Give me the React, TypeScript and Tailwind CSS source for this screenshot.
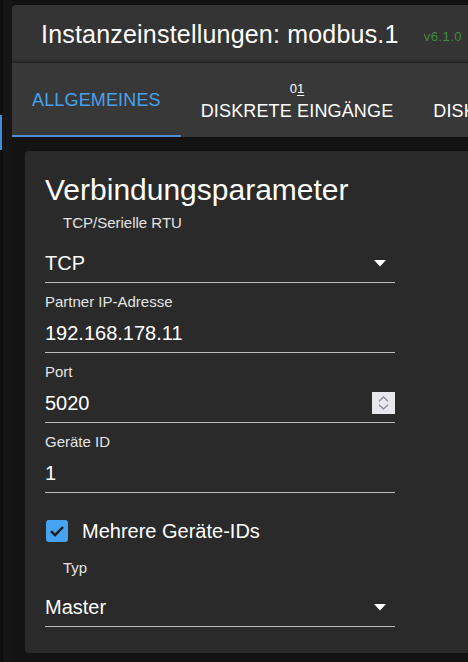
import React from 'react';

const FONT = { fontFamily: '"Liberation Sans", Arial, sans-serif' };

function SelectArrow() {
  return (
    <svg width="12" height="7" viewBox="0 0 12 7" className="block">
      <path d="M0 0h12L6 6.5z" fill="#ffffff" />
    </svg>
  );
}

function SpinButton() {
  return (
    <div className="w-[23px] h-[22px] bg-[#e9e7ee] flex flex-col items-center justify-center gap-[2px]">
      <svg width="11" height="6" viewBox="0 0 11 6">
        <path d="M1 5.2L5.5 1 10 5.2" fill="none" stroke="#8f8d9b" strokeWidth="1.4" />
      </svg>
      <svg width="11" height="6" viewBox="0 0 11 6">
        <path d="M1 0.8L5.5 5 10 0.8" fill="none" stroke="#8f8d9b" strokeWidth="1.4" />
      </svg>
    </div>
  );
}

function TextField({ label, value, spin }: { label: string; value: string; spin?: boolean }) {
  return (
    <div className="w-[350px] pt-[10px] pb-[7px] border-b border-[#bdbdbd]">
      <div className="text-[15px] leading-[18px] text-[#e3e3e3]">{label}</div>
      <div className="mt-[10px] h-[24px] flex items-center justify-between">
        <span className="text-[20px] leading-[24px] text-white">{value}</span>
        {spin && <SpinButton />}
      </div>
    </div>
  );
}

function SelectField({ label, value, gap }: { label: string; value: string; gap: string }) {
  return (
    <div className="w-[350px]">
      <div className="ml-[18px] text-[15px] leading-[18px] text-[#e3e3e3]">{label}</div>
      <div className={`${gap} pb-[7px] border-b border-[#bdbdbd] flex items-center justify-between pr-[9px]`}>
        <span className="text-[20px] leading-[24px] text-white">{value}</span>
        <SelectArrow />
      </div>
    </div>
  );
}

export default function App() {
  return (
    <div className="w-[468px] h-[662px] overflow-hidden bg-[#121212] flex" style={FONT}>
      {/* side rail behind the dialog */}
      <div className="w-[3px] shrink-0 bg-[#0e0e0e] flex flex-col">
        <div className="h-[115px]" />
        <div className="h-[35px] w-[2px] bg-[#3d8fe0]" />
      </div>
      <div className="w-[9px] shrink-0 bg-[#161616]" />

      <div className="pt-[5px] shrink-0">
        <div className="w-[520px] h-[700px] rounded-tl-[4px] overflow-hidden flex flex-col bg-[#131313]">
          {/* title bar */}
          <div className="h-[58px] bg-[#343434] pl-[29px] flex items-center gap-[25px]">
            <span className="text-[25px] leading-[28px] tracking-[0.2px] text-white whitespace-nowrap">
              Instanzeinstellungen: modbus.1
            </span>
            <span className="text-[13px] tracking-[0.5px] text-[#3f8d3f] mt-[5px] whitespace-nowrap">v6.1.0</span>
          </div>

          {/* tabs */}
          <div className="h-[74px] bg-[#383838] flex shadow-[0_-1px_3px_rgba(0,0,0,0.5)]">
            <div className="relative px-[20px] flex items-center">
              <span className="text-[18px] tracking-[0.15px] text-[#46a2ec] uppercase">Allgemeines</span>
              <div className="absolute left-0 right-0 bottom-0 h-[2px] bg-[#4a8fd8]" />
            </div>
            <div className="px-[20px] flex flex-col items-center justify-center pt-[3px]">
              <span className="text-[13px] leading-[14px] text-white">
                0<span className="underline underline-offset-[2px]">1</span>
              </span>
              <span className="mt-[5px] text-[18px] leading-[20px] tracking-[0.15px] text-white uppercase whitespace-nowrap">
                Diskrete Eingänge
              </span>
            </div>
            <div className="px-[20px] flex flex-col items-center justify-center pt-[3px]">
              <span className="text-[13px] leading-[14px] text-transparent">01</span>
              <span className="mt-[5px] text-[18px] leading-[20px] tracking-[0.15px] text-white uppercase whitespace-nowrap">
                Diskrete Ausgänge
              </span>
            </div>
          </div>

          {/* content */}
          <div className="pl-[13px] pt-[14px]">
            <div className="bg-[#2a2a2a] rounded-[4px] pl-[20px] pt-[21px] pb-[26px]">
              <div className="text-[30px] leading-[36px] text-white">Verbindungsparameter</div>
              <div className="mt-[6px]">
                <SelectField label="TCP/Serielle RTU" value="TCP" gap="mt-[19px]" />
              </div>
              <TextField label="Partner IP-Adresse" value="192.168.178.11" />
              <TextField label="Port" value="5020" spin />
              <TextField label="Geräte ID" value="1" />

              <div className="mt-[26px] flex items-center gap-[14px]">
                <div className="ml-[1px] w-[22px] h-[22px] rounded-[3px] bg-[#45a3f2] flex items-center justify-center">
                  <svg width="16" height="12" viewBox="0 0 16 12">
                    <path d="M2 6.2l4 4L14 2" fill="none" stroke="#1f1f1f" strokeWidth="2.4" />
                  </svg>
                </div>
                <span className="text-[20px] leading-[24px] text-white">Mehrere Geräte-IDs</span>
              </div>

              <div className="mt-[16px]">
                <SelectField label="Typ" value="Master" gap="mt-[18px]" />
              </div>
            </div>
          </div>
        </div>
      </div>
    </div>
  );
}
